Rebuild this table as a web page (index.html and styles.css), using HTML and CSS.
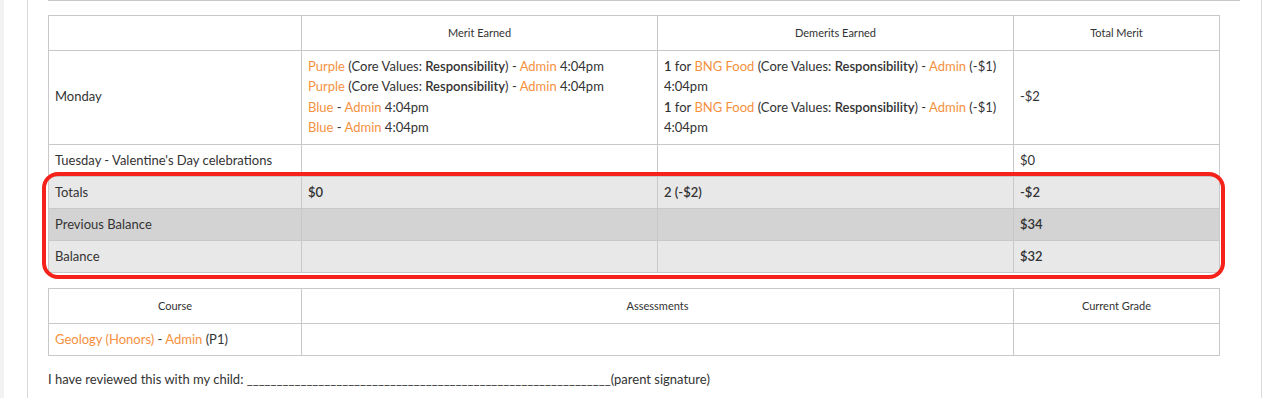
FILE: index.html
```html
<!DOCTYPE html>
<html>
<head>
<meta charset="utf-8">
<link rel="stylesheet" href="styles.css">
</head>
<body>
<div class="shell">
  <div class="strip"></div>
  <div class="page">
    <div class="rule"></div>
    <table class="grid merits">
      <colgroup>
        <col class="c-day"><col class="c-mid"><col class="c-mid"><col>
      </colgroup>
      <thead>
        <tr><th></th><th>Merit Earned</th><th>Demerits Earned</th><th>Total Merit</th></tr>
      </thead>
      <tbody>
        <tr class="tall">
          <td>Monday</td>
          <td>
            <div><a>Purple</a> (Core Values: <b>Responsibility</b>) - <a>Admin</a> 4:04pm</div>
            <div><a>Purple</a> (Core Values: <b>Responsibility</b>) - <a>Admin</a> 4:04pm</div>
            <div><a>Blue</a> - <a>Admin</a> 4:04pm</div>
            <div><a>Blue</a> - <a>Admin</a> 4:04pm</div>
          </td>
          <td>
            <div><b>1</b> for <a>BNG Food</a> (Core Values: <b>Responsibility</b>) - <a>Admin</a> (-$1) 4:04pm</div>
            <div><b>1</b> for <a>BNG Food</a> (Core Values: <b>Responsibility</b>) - <a>Admin</a> (-$1) 4:04pm</div>
          </td>
          <td>-$2</td>
        </tr>
        <tr>
          <td>Tuesday - Valentine's Day celebrations</td><td></td><td></td><td>$0</td>
        </tr>
        <tr class="sum">
          <td>Totals</td><td class="strong">$0</td><td class="strong">2 (-$2)</td><td class="strong">-$2</td>
        </tr>
        <tr class="sum dark">
          <td>Previous Balance</td><td></td><td></td><td class="strong">$34</td>
        </tr>
        <tr class="sum">
          <td>Balance</td><td></td><td></td><td class="strong">$32</td>
        </tr>
      </tbody>
    </table>
    <div class="highlight"></div>
    <table class="grid courses">
      <colgroup>
        <col class="c-day"><col class="c-wide"><col>
      </colgroup>
      <thead>
        <tr><th>Course</th><th>Assessments</th><th>Current Grade</th></tr>
      </thead>
      <tbody>
        <tr><td><a>Geology (Honors)</a> - <a>Admin</a> (P1)</td><td></td><td></td></tr>
      </tbody>
    </table>
    <p class="sign">I have reviewed this with my child: _____________________________________________________________(parent signature)</p>
  </div>
</div>
</body>
</html>
```
FILE: styles.css
```css
html, body {
  margin: 0;
  padding: 0;
  background: #fff;
}
body {
  font-family: Lato, "Noto Sans", sans-serif;
  font-size: 13px;
  color: #333;
}
.shell {
  display: flex;
  height: 398px;
  overflow: hidden;
}
.strip {
  width: 4px;
  background: #f2f2f2;
  flex: none;
}
.page {
  position: relative;
  margin-left: 23px;
  width: 1192px;
  padding: 0 21px 0 20px;
  border-left: 1px solid #dadada;
  border-right: 1px solid #dadada;
  flex: none;
}
.rule {
  border-top: 1px solid #c9c9c9;
  margin-bottom: 14px;
}
.grid {
  width: 1172px;
  border-collapse: collapse;
  table-layout: fixed;
}
.grid th, .grid td {
  border: 1px solid #c8c8c8;
  padding: 5px 6px;
  line-height: 21px;
  vertical-align: middle;
  text-align: left;
}
.grid th {
  font-size: 11px;
  font-weight: normal;
  text-align: center;
  line-height: 14px;
  padding: 10px 6px;
  height: 14px;
}
.c-day { width: 253px; }
.c-mid { width: 356px; }
.c-wide { width: 712px; }
.grid a { color: #f5913e; }
.grid b { font-weight: 600; }
.tall td { line-height: 20.3px; padding-top: 5px; padding-bottom: 7px; }
.sum td { background: #e8e8e8; height: 21px; }
.sum.dark td { background: #d3d3d3; }
.strong { font-weight: 600; }
.highlight {
  position: absolute;
  left: 14px;
  top: 172px;
  width: 1175px;
  height: 99px;
  border: 4px solid #f5221b;
  border-radius: 16px;
  pointer-events: none;
}
.courses { margin-top: 15px; }
.sign {
  margin: 13px 0 0;
  line-height: 20px;
}
```
